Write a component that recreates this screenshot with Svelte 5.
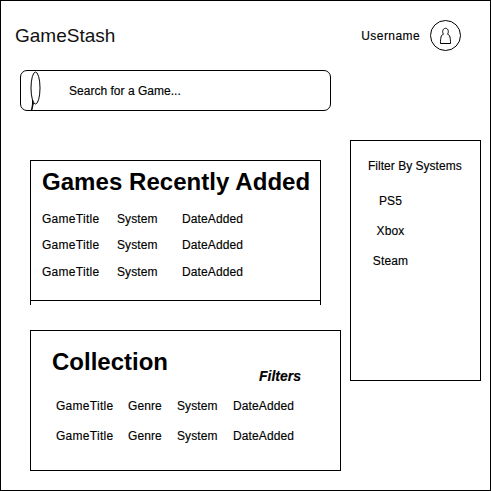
<script>
  const recent = [0, 1, 2];
  const collection = [0, 1];
  const systems = ['PS5', 'Xbox', 'Steam'];
</script>

<div class="page">
  <header>
    <h1>GameStash</h1>
    <span class="user">Username</span>
    <svg class="avatar" width="32" height="32" viewBox="0 0 32 32" fill="none" stroke="#000">
      <circle cx="16.5" cy="15.5" r="15" />
      <path d="M14.500 14.200C13 12.400 13.500 8.300 16.500 8.300S20 12.400 18.500 14.200C21 14.700 21.500 18 21.500 23.500H11.500C11.500 18 12 14.700 14.500 14.200Z" />
    </svg>
  </header>

  <div class="search">
    <svg width="16" height="42" viewBox="0 0 16 42" fill="none" stroke="#000">
      <ellipse cx="6.500" cy="18" rx="4.500" ry="16" />
      <path d="M3.500 29.500V34L2.500 41L4.500 33" />
    </svg>
    <span>Search for a Game...</span>
  </div>

  <main>
    <div class="left">
      <section class="recent">
        <h2>Games Recently Added</h2>
        {#each recent as row (row)}
          <div class="row">
            <span class="title">GameTitle</span>
            <span class="system">System</span>
            <span class="date">DateAdded</span>
          </div>
        {/each}
      </section>
      <div class="tails"></div>
      <section class="collection">
        <div class="heading">
          <h2>Collection</h2>
          <em>Filters</em>
        </div>
        {#each collection as row (row)}
          <div class="row">
            <span class="title">GameTitle</span>
            <span class="genre">Genre</span>
            <span class="system">System</span>
            <span class="date">DateAdded</span>
          </div>
        {/each}
      </section>
    </div>
    <aside>
      <h3>Filter By Systems</h3>
      <ul>
        {#each systems as system (system)}
          <li>{system}</li>
        {/each}
      </ul>
    </aside>
  </main>
</div>

<style>
  :global(body) {
    margin: 0;
    background: #fff;
  }
  .page, .page * {
    box-sizing: border-box;
  }
  .page {
    width: 491px;
    height: 491px;
    border: 1px solid #000;
    font: 12px/14px "Liberation Sans", Arial, sans-serif;
    color: #000;
    -webkit-text-stroke: 0.15px #000;
    white-space: nowrap;
    overflow: hidden;
  }
  h1, h2, h3, ul {
    margin: 0;
    padding: 0;
  }
  header {
    display: flex;
    align-items: center;
    height: 69px;
    padding: 0 29px 0 14px;
  }
  h1 {
    font-size: 19px;
    line-height: 22px;
    font-weight: 400;
    color: #111;
    -webkit-text-stroke: 0;
  }
  .user {
    margin-left: auto;
    margin-right: 9px;
    letter-spacing: 0.42px;
  }
  .avatar {
    display: block;
  }
  .search {
    display: flex;
    align-items: center;
    width: 311px;
    height: 41px;
    margin-left: 19px;
    border: 1px solid #000;
    border-radius: 7px;
  }
  .search svg {
    flex: none;
    margin-left: 8px;
  }
  .search span {
    margin-left: 24px;
    letter-spacing: 0.02px;
  }
  main {
    display: flex;
    align-items: flex-start;
    margin-top: 29px;
    padding-left: 29px;
  }
  .left {
    width: 311px;
    margin-right: 9px;
    padding-top: 20px;
  }
  h2 {
    font-size: 24px;
    line-height: 28px;
    font-weight: 700;
    -webkit-text-stroke: 0;
  }
  .recent {
    width: 291px;
    height: 141px;
    border: 1px solid #000;
    padding: 7px 0 0 11px;
  }
  .recent h2 {
    margin-bottom: 16px;
    letter-spacing: 0.05px;
  }
  .recent .row {
    height: 26px;
  }
  .recent .row:nth-of-type(2) {
    height: 27px;
  }
  .tails {
    width: 291px;
    height: 4px;
    border: solid #000;
    border-width: 0 1px;
  }
  .row {
    display: flex;
  }
  .title {
    width: 75px;
    letter-spacing: 0.28px;
  }
  .system {
    width: 65px;
    letter-spacing: 0.1px;
  }
  .date {
    letter-spacing: 0.12px;
  }
  .collection {
    height: 141px;
    margin-top: 25px;
    border: 1px solid #000;
    padding: 17px 0 0 25px;
  }
  .heading {
    display: flex;
    height: 51px;
    margin-left: -4px;
  }
  em {
    margin: 20px 0 0 91px;
    font-size: 14px;
    line-height: 16px;
    font-weight: 700;
  }
  .collection .row {
    height: 30px;
  }
  .collection .title {
    width: 72px;
  }
  .genre {
    width: 49px;
    letter-spacing: 0.1px;
  }
  .collection .system {
    width: 56px;
  }
  aside {
    width: 131px;
    height: 241px;
    border: 1px solid #000;
    padding-top: 18px;
  }
  h3 {
    margin-left: 17px;
    font-size: 12px;
    line-height: 14px;
    font-weight: 400;
    letter-spacing: 0.02px;
  }
  ul {
    width: 79px;
    padding-top: 21px;
    list-style: none;
    text-align: center;
  }
  li {
    height: 30px;
    letter-spacing: 0.12px;
  }
</style>
